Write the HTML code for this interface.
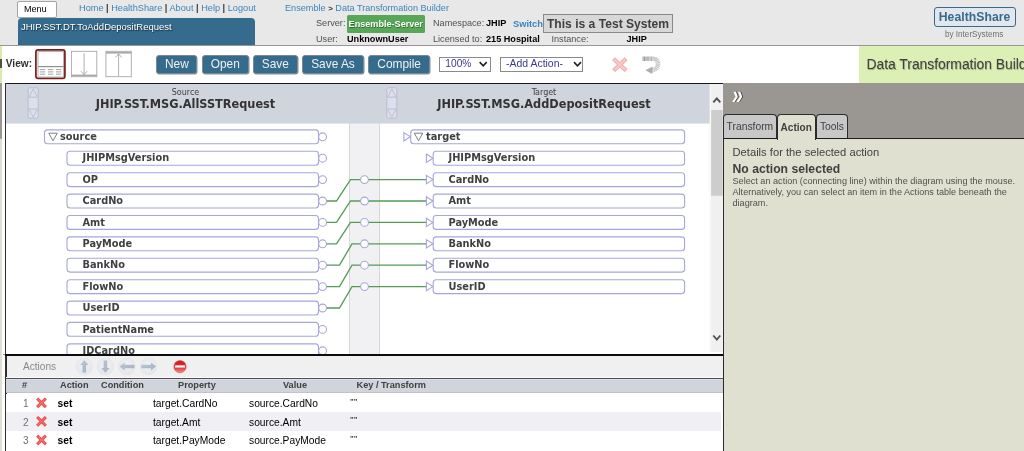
<!DOCTYPE html>
<html>
<head>
<meta charset="utf-8">
<title>Data Transformation Builder</title>
<style>
html,body{margin:0;padding:0;}
body{width:1024px;height:451px;overflow:hidden;background:#fff;font-family:"Liberation Sans",Arial,sans-serif;position:relative;color:#404040;}
.abs{position:absolute;white-space:nowrap;}
#hdr{left:0;top:0;width:1024px;height:45px;background:#e8e8e8;border-bottom:1px solid #969696;}
#menu{left:16.9px;top:0.7px;width:38.5px;height:15px;background:#fff;border:1px solid #a4a4a4;border-radius:2px;font-size:9.1px;line-height:15px;color:#000;}
#menu span{margin-left:6px;}
.lnk{font-size:9.15px;line-height:11px;color:#3b84bc;}
.lnk i{font-style:normal;color:#383838;font-weight:bold;}
#ttl{left:17.5px;top:18.3px;width:237.2px;height:27px;background:#356b8d;border-radius:4px 4px 0 0;}
#ttl span{position:absolute;left:3.4px;top:2.8px;font-size:9.5px;line-height:11px;color:#fff;text-shadow:0.7px 0.7px 1px #1a2a38;}
.lab{font-size:9.15px;line-height:11px;color:#505050;}
.val{font-size:9.15px;line-height:11px;color:#000;font-weight:bold;}
#srv{left:346.5px;top:15px;width:78.5px;height:17.5px;background:#58a658;border-radius:1.5px;color:#fff;font-weight:bold;font-size:9.1px;line-height:19px;text-align:center;text-shadow:0.5px 0.5px 0.6px #2d6a2d;}
#tst{left:543px;top:14.4px;width:128px;height:16.6px;background:#d8d8d8;border:1px solid #8a8a8a;color:#404040;font-weight:bold;font-size:12.1px;line-height:18.2px;text-align:center;}
#logo{left:933.5px;top:7px;width:80.2px;height:17.6px;border:1.9px solid #356b8d;border-radius:3px;background:#e2e6ee;color:#356b8d;font-weight:bold;font-size:12.2px;line-height:18px;text-align:center;letter-spacing:0.05px;}
#by{left:945px;top:28.6px;font-size:8.15px;line-height:11px;color:#707070;}
#tb{left:0;top:46px;width:1024px;height:37px;background:#fff;}
#banner{left:858.5px;top:46px;width:166px;height:36.7px;background:#dcefb4;}
#banner span{position:absolute;left:8px;top:9px;font-size:13.85px;line-height:18px;color:#404040;text-shadow:0.6px 0.6px 0.8px #9aa880;}
.btn{top:54.5px;height:17.8px;background:#356b8d;border:1px solid #7c8790;border-radius:3px;color:#f0f0f0;font-size:11.9px;line-height:17.8px;text-align:center;box-shadow:0.5px 0.5px 0.5px #8090a0;}
.sel{top:57px;height:12.5px;border:1px solid #8a8a8a;background:#fff;color:#3a3a8a;font-size:10.2px;line-height:12.4px;}
.sel span{margin-left:4.5px;}
#side{left:722.5px;top:83px;width:302px;height:368px;background:#9a9793;}
#pane{left:722.5px;top:137.7px;width:302px;height:313px;background:#e0e0d0;border-left:1px solid #2a2a2a;border-top:1px solid #1c1c1c;}
.tab{top:113.7px;height:23.3px;background:#c8c8c8;border:1.3px solid #2c2c2c;border-bottom:none;border-radius:4px 4px 0 0;font-size:10.3px;line-height:23px;color:#404040;text-align:center;}
#tabA{top:113.8px;height:24.9px;background:#e0e0d0;font-weight:bold;font-size:10.05px;line-height:26px;border-width:1px 1.5px 0 1px;}
#act{left:6.7px;top:356.4px;width:716.3px;height:21px;background:#f0f0f0;}
#thead{left:6px;top:378.9px;width:717px;height:13px;background:#d0d4dc;border-top:1px solid #dde0e8;border-bottom:1.6px solid #c2c2c4;height:12.2px;}
.th{top:379.4px;font-size:9.2px;line-height:13px;font-weight:bold;color:#404040;}
.row{left:6px;width:715px;height:18.6px;}
#r3{height:21px;}
.td{font-size:10.25px;line-height:13px;color:#000;}
.num{font-size:10.15px;line-height:13px;color:#707070;}
</style>
</head>
<body>
<div id="root" style="position:absolute;left:0;top:0;width:1024px;height:451px;overflow:hidden;will-change:transform;">
<!-- header -->
<div id="hdr" class="abs"></div>
<div id="menu" class="abs"><span>Menu</span></div>
<div class="abs lnk" style="left:79px;top:3px;font-size:9.2px">Home <i>|</i> HealthShare <i>|</i> About <i>|</i> Help <i>|</i> Logout</div>
<div class="abs lnk" style="left:285px;top:3px">Ensemble <i style="font-weight:bold;font-size:8px">&gt;</i> Data Transformation Builder</div>
<div id="ttl" class="abs"><span>JHIP.SST.DT.ToAddDepositRequest</span></div>
<div class="abs lab" style="left:316px;top:18.2px">Server:</div>
<div id="srv" class="abs">Ensemble-Server</div>
<div class="abs lab" style="left:433px;top:18.2px">Namespace:</div>
<div class="abs val" style="left:486px;top:18.2px">JHIP</div>
<div class="abs lnk" style="left:513px;top:18.7px;font-weight:bold;font-size:9.3px">Switch</div>
<div id="tst" class="abs">This is a Test System</div>
<div class="abs lab" style="left:316px;top:33.5px">User:</div>
<div class="abs val" style="left:347px;top:33.5px">UnknownUser</div>
<div class="abs lab" style="left:433px;top:33.5px">Licensed to:</div>
<div class="abs val" style="left:486px;top:33.5px">215 Hospital</div>
<div class="abs lab" style="left:551.5px;top:33.5px">Instance:</div>
<div class="abs val" style="left:626.5px;top:33.5px">JHIP</div>
<div id="logo" class="abs">HealthShare</div>
<div id="by" class="abs">by InterSystems</div>

<!-- toolbar -->
<div id="tb" class="abs"></div>
<div class="abs" style="left:0;top:46px;width:2px;height:37px;background:#d8eca8"></div>
<div class="abs" style="left:0;top:58.5px;width:1.5px;height:9.5px;background:#505050"></div>
<div class="abs" style="left:5.8px;top:57px;font-size:10.15px;line-height:13px;font-weight:bold;color:#303030">View:</div>
<svg class="abs" style="left:34px;top:48px" width="100" height="33" viewBox="34 48 100 33">
  <rect x="35.9" y="49.8" width="29" height="28.6" rx="2.2" fill="#fff" stroke="#7a1c1c" stroke-width="1.7"/>
  <g fill="none" stroke="#a8a8a8" stroke-width="0.9">
    <rect x="38" y="51.6" width="25.4" height="25.4"/>
    <path d="M38 66.6 H63.4" stroke="#909090" stroke-width="1.2"/>
    <path d="M39.8 69.6 h5.4 M47.9 69.6 h5.4 M56 69.6 h5.4 M39.8 71.9 h5.4 M47.9 71.9 h5.4 M56 71.9 h5.4 M39.8 74.2 h5.4 M47.9 74.2 h5.4 M56 74.2 h5.4" stroke="#8c8c8c" stroke-width="0.8"/>
    <rect x="71.4" y="51.3" width="25.4" height="25.4" fill="#fff"/>
    <path d="M71.4 75.4 H96.8" stroke-width="1.6"/>
    <path d="M84.1 53.2 V74.6 M81 71.2 L84.1 74.6 L87.2 71.2" stroke="#9c9c9c" stroke-width="0.8"/>
    <rect x="105.9" y="51.3" width="25.4" height="25.4" fill="#fff"/>
    <path d="M105.9 52.8 H131.3" stroke-width="1.6"/>
    <path d="M118.6 76 V54 M115.5 57.4 L118.6 54 L121.7 57.4" stroke="#9c9c9c" stroke-width="0.8"/>
  </g>
</svg>
<div class="abs btn" style="left:156.2px;width:39.3px">New</div>
<div class="abs btn" style="left:201.5px;width:45.5px">Open</div>
<div class="abs btn" style="left:252.8px;width:43.2px">Save</div>
<div class="abs btn" style="left:302px;width:60px">Save As</div>
<div class="abs btn" style="left:368.3px;width:59.7px">Compile</div>
<div class="abs sel" style="left:439px;width:49.5px"><span style="margin-left:5.3px">100%</span></div>
<div class="abs sel" style="left:499.8px;width:81.7px;font-size:10.45px"><span style="margin-left:5.3px">-Add Action-</span></div>
<svg class="abs" style="left:439px;top:56px" width="230" height="20" viewBox="439 56 230 20">
  <path d="M479.7 62.1 L483.2 65.8 L486.7 62.1" fill="none" stroke="#202020" stroke-width="1.6"/>
  <path d="M574 62.1 L577.5 65.8 L581 62.1" fill="none" stroke="#202020" stroke-width="1.6"/>
  <g stroke-linecap="square" fill="none"><path d="M615.1 60.2 L624.5 69.2 M624.5 60.2 L615.1 69.2" stroke="#f2a4a4" stroke-width="4.1"/><path d="M615.1 60.2 L624.5 69.2 M624.5 60.2 L615.1 69.2" stroke="#f9c6c6" stroke-width="2.6"/></g>
  <defs><linearGradient id="gu" gradientUnits="userSpaceOnUse" x1="642" y1="58" x2="660" y2="68"><stop offset="0" stop-color="#8e8e8e"/><stop offset="0.55" stop-color="#bcbcbc"/><stop offset="1" stop-color="#cacaca"/></linearGradient></defs>
  <path d="M642.6 58.8 H652.6 C657.4 58.8 658.4 62.6 657.8 65.4 C657.2 68.4 654.6 70.2 651.6 70.3" fill="none" stroke="url(#gu)" stroke-width="4.5" stroke-dasharray="1 0.4"/>
  <path d="M645.4 70.3 L652.6 66.4 L652.2 74 Z" fill="#adadad"/>
</svg>
<div id="banner" class="abs"><span>Data Transformation Builder</span></div>

<!-- diagram frame -->
<div class="abs" style="left:5px;top:82.5px;width:718px;height:1.5px;background:#1a1a1a"></div>
<div class="abs" style="left:5.2px;top:83px;width:1.5px;height:368px;background:#303030"></div>
<div class="abs" style="left:0;top:83px;width:1.7px;height:55.5px;background:#9a9793"></div><div class="abs" style="left:0;top:138px;width:2.2px;height:313px;background:#a8a89c"></div><div class="abs" style="left:0;top:139px;width:1.6px;height:312px;background:#e0e0d0"></div>
<svg id="dg" width="717" height="271" viewBox="6 84 717 271" style="position:absolute;left:6px;top:84px;overflow:hidden">
<rect x="6" y="84" width="704" height="271" fill="#fff"/>
<rect x="349.5" y="84" width="30" height="271" fill="#f1f1f4" stroke="#cfcfd4" stroke-width="0.8"/>
<rect x="6" y="84" width="704" height="39.6" fill="#d0d4dc"/>
<g fill="#dcdfec" stroke="#b4b8cc" stroke-width="0.8"><rect x="28.2" y="87.8" width="10" height="30.4" rx="1.5"/><path d="M29.0 97.2 L33.2 89 L37.4 97.2 Z"/><path d="M29.0 109 L33.2 117.2 L37.4 109 Z"/></g>
<g fill="#dcdfec" stroke="#b4b8cc" stroke-width="0.8"><rect x="386.8" y="87.8" width="10" height="30.4" rx="1.5"/><path d="M387.6 97.2 L391.8 89 L396.0 97.2 Z"/><path d="M387.6 109 L391.8 117.2 L396.0 109 Z"/></g>
<g font-family="'DejaVu Sans Condensed', 'DejaVu Sans', 'Liberation Sans', sans-serif" font-size="8.9" fill="#404040" text-anchor="middle"><text x="185.5" y="95">Source</text><text x="544" y="95">Target</text></g>
<g font-family="'DejaVu Sans Condensed', 'DejaVu Sans', 'Liberation Sans', sans-serif" font-weight="bold" font-size="12.6" fill="#333" text-anchor="middle"><text x="185.5" y="108">JHIP.SST.MSG.AllSSTRequest</text><text x="544" y="108">JHIP.SST.MSG.AddDepositRequest</text></g>
<g fill="none" stroke="#559a55" stroke-width="1.3">
<path d="M326.5 201.0 H336.5 L350.5 179.6 H426"/>
<path d="M326.5 222.4 H336.5 L350.5 201.0 H426"/>
<path d="M326.5 243.8 H336.5 L350.5 222.4 H426"/>
<path d="M326.5 265.2 H339.5 L352 243.8 H426"/>
<path d="M326.5 286.6 H339.5 L352 265.2 H426"/>
<path d="M326.5 308.0 H339.5 L352 286.6 H426"/>
</g>
<g fill="#fff" stroke="#a6a6dc" stroke-width="1.1">
<rect x="44.5" y="129.9" width="274.0" height="13.9" rx="3"/>
<circle cx="322.6" cy="136.8" r="3.9"/>
<rect x="67" y="151.3" width="251.5" height="13.9" rx="3"/>
<circle cx="322.6" cy="158.2" r="3.9"/>
<rect x="67" y="172.7" width="251.5" height="13.9" rx="3"/>
<circle cx="322.6" cy="179.6" r="3.9"/>
<rect x="67" y="194.1" width="251.5" height="13.9" rx="3"/>
<circle cx="322.6" cy="201.0" r="3.9"/>
<rect x="67" y="215.5" width="251.5" height="13.9" rx="3"/>
<circle cx="322.6" cy="222.4" r="3.9"/>
<rect x="67" y="236.9" width="251.5" height="13.9" rx="3"/>
<circle cx="322.6" cy="243.8" r="3.9"/>
<rect x="67" y="258.2" width="251.5" height="13.9" rx="3"/>
<circle cx="322.6" cy="265.2" r="3.9"/>
<rect x="67" y="279.7" width="251.5" height="13.9" rx="3"/>
<circle cx="322.6" cy="286.6" r="3.9"/>
<rect x="67" y="301.1" width="251.5" height="13.9" rx="3"/>
<circle cx="322.6" cy="308.0" r="3.9"/>
<rect x="67" y="322.4" width="251.5" height="13.9" rx="3"/>
<circle cx="322.6" cy="329.4" r="3.9"/>
<rect x="67" y="343.9" width="251.5" height="13.9" rx="3"/>
<circle cx="322.6" cy="350.8" r="3.9"/>
<rect x="410.7" y="129.9" width="273.90000000000003" height="13.9" rx="3"/>
<path d="M403.9 132.6 L410.4 136.8 L403.9 141.0 Z"/>
<rect x="433.2" y="151.3" width="251.40000000000003" height="13.9" rx="3"/>
<path d="M426.4 154.0 L432.9 158.2 L426.4 162.4 Z"/>
<rect x="433.2" y="172.7" width="251.40000000000003" height="13.9" rx="3"/>
<path d="M426.4 175.4 L432.9 179.6 L426.4 183.8 Z"/>
<rect x="433.2" y="194.1" width="251.40000000000003" height="13.9" rx="3"/>
<path d="M426.4 196.8 L432.9 201.0 L426.4 205.2 Z"/>
<rect x="433.2" y="215.5" width="251.40000000000003" height="13.9" rx="3"/>
<path d="M426.4 218.2 L432.9 222.4 L426.4 226.6 Z"/>
<rect x="433.2" y="236.9" width="251.40000000000003" height="13.9" rx="3"/>
<path d="M426.4 239.6 L432.9 243.8 L426.4 248.0 Z"/>
<rect x="433.2" y="258.2" width="251.40000000000003" height="13.9" rx="3"/>
<path d="M426.4 261.0 L432.9 265.2 L426.4 269.4 Z"/>
<rect x="433.2" y="279.7" width="251.40000000000003" height="13.9" rx="3"/>
<path d="M426.4 282.4 L432.9 286.6 L426.4 290.8 Z"/>
<circle cx="364.5" cy="179.6" r="3.9"/>
<circle cx="364.5" cy="201.0" r="3.9"/>
<circle cx="364.5" cy="222.4" r="3.9"/>
<circle cx="364.5" cy="243.8" r="3.9"/>
<circle cx="364.5" cy="265.2" r="3.9"/>
<circle cx="364.5" cy="286.6" r="3.9"/>
</g>
<g fill="#fff" stroke="#707080" stroke-width="0.9">
<path d="M48.8 133.2 H57.2 L53 140.8 Z"/>
<path d="M414.3 133.2 H422.7 L418.5 140.8 Z"/>
</g>
<g font-family="'DejaVu Sans Condensed', 'DejaVu Sans', 'Liberation Sans', sans-serif" font-weight="bold" font-size="10.9" fill="#404040">
<text x="60" y="139.9">source</text>
<text x="82.5" y="161.3">JHIPMsgVersion</text>
<text x="82.5" y="182.7">OP</text>
<text x="82.5" y="204.1">CardNo</text>
<text x="82.5" y="225.5">Amt</text>
<text x="82.5" y="246.9">PayMode</text>
<text x="82.5" y="268.3">BankNo</text>
<text x="82.5" y="289.7">FlowNo</text>
<text x="82.5" y="311.1">UserID</text>
<text x="82.5" y="332.5">PatientName</text>
<text x="82.5" y="353.9">IDCardNo</text>
<text x="426" y="139.9">target</text>
<text x="448.5" y="161.3">JHIPMsgVersion</text>
<text x="448.5" y="182.7">CardNo</text>
<text x="448.5" y="204.1">Amt</text>
<text x="448.5" y="225.5">PayMode</text>
<text x="448.5" y="246.9">BankNo</text>
<text x="448.5" y="268.3">FlowNo</text>
<text x="448.5" y="289.7">UserID</text>
</g>
<rect x="709.8" y="84" width="13" height="268" fill="#f0f0f0"/>
<rect x="709.8" y="84" width="1.2" height="268" fill="#f8f8f8"/>
<rect x="711.2" y="110" width="11.5" height="85.7" fill="#cdcdcd"/>
<path d="M713.3 102.3 L716.8 98.3 L720.3 102.3" fill="none" stroke="#505050" stroke-width="1.85"/>
<path d="M713.3 335.5 L716.8 339.5 L720.3 335.5" fill="none" stroke="#505050" stroke-width="1.85"/>
</svg>
<div class="abs" style="left:2.5px;top:353.9px;width:3px;height:1.4px;background:#8a8a8a"></div><div class="abs" style="left:5.2px;top:353.6px;width:718px;height:2px;background:#0c0c0c"></div>

<!-- actions -->
<div id="act" class="abs"></div>
<div class="abs" style="left:23px;top:360px;font-size:10.1px;line-height:13px;color:#888">Actions</div>
<svg class="abs" style="left:70px;top:356px" width="130" height="22" viewBox="70 356 130 22">
  <defs>
    <radialGradient id="gb" cx="50%" cy="40%" r="60%"><stop offset="0" stop-color="#f2f3f5"/><stop offset="1" stop-color="#e2e5ea"/></radialGradient>
    <linearGradient id="gr" x1="0" y1="0" x2="0" y2="1"><stop offset="0" stop-color="#cc1c1c"/><stop offset="0.55" stop-color="#de3030"/><stop offset="1" stop-color="#f59090"/></linearGradient>
    <linearGradient id="ga" x1="0" y1="0" x2="1" y2="1"><stop offset="0" stop-color="#bcc7d2"/><stop offset="1" stop-color="#a4b1c0"/></linearGradient>
  </defs>
  <g fill="url(#gb)" stroke="#e4e6ea" stroke-width="0.6">
    <circle cx="84.3" cy="366.5" r="8.4"/><circle cx="105.4" cy="366.5" r="8.4"/><circle cx="127" cy="366.5" r="8.4"/><circle cx="148.6" cy="366.5" r="8.4"/>
  </g>
  <g fill="url(#ga)">
    <path d="M84.3 360.2 L88.5 365.0 H86.1 V372.6 H82.5 V365.0 H80.1 Z"/>
    <path d="M105.4 372.8 L109.60000000000001 368.0 H107.2 V360.4 H103.60000000000001 V368.0 H101.2 Z"/>
    <path d="M119.6 366.5 L124.6 362.6 V364.8 H134.4 V368.2 H124.6 V370.4 Z"/>
    <path d="M156.0 366.5 L151.0 362.6 V364.8 H141.2 V368.2 H151.0 V370.4 Z"/>
  </g>
  <circle cx="180" cy="366.7" r="6.2" fill="url(#gr)" stroke="#d84848" stroke-width="0.5"/>
  <rect x="174.9" y="365.2" width="10.2" height="2.5" rx="0.5" fill="#fff" stroke="#b06060" stroke-width="0.4"/>
</svg>
<div class="abs" style="left:6px;top:376.8px;width:716px;height:1px;background:#fbfbfb"></div><div class="abs" style="left:6px;top:377.8px;width:717px;height:1.1px;background:#505050"></div>
<div id="thead" class="abs"></div>
<div class="abs th" style="left:22px">#</div>
<div class="abs th" style="left:60px">Action</div>
<div class="abs th" style="left:101px">Condition</div>
<div class="abs th" style="left:178px">Property</div>
<div class="abs th" style="left:283px">Value</div>
<div class="abs th" style="left:356.5px">Key / Transform</div>

<div class="abs row" style="top:393.5px;background:#fff"></div>
<div class="abs row" style="top:412.1px;background:#f0f0f4"></div>
<div id="r3" class="abs row" style="top:430.7px;background:#fff"></div>

<div class="abs num" style="left:23px;top:397px">1</div>
<div class="abs td" style="left:57.5px;top:397px;font-weight:bold">set</div>
<div class="abs td" style="left:153px;top:397px">target.CardNo</div>
<div class="abs td" style="left:249px;top:397px">source.CardNo</div>
<div class="abs td" style="left:350px;top:394.5px;font-size:7.8px;font-weight:bold;color:#333;letter-spacing:0.1px">""</div>

<div class="abs num" style="left:23px;top:415.6px">2</div>
<div class="abs td" style="left:57.5px;top:415.6px;font-weight:bold">set</div>
<div class="abs td" style="left:153px;top:415.6px">target.Amt</div>
<div class="abs td" style="left:249px;top:415.6px">source.Amt</div>
<div class="abs td" style="left:350px;top:413.1px;font-size:7.8px;font-weight:bold;color:#333;letter-spacing:0.1px">""</div>

<div class="abs num" style="left:23px;top:434.2px">3</div>
<div class="abs td" style="left:57.5px;top:434.2px;font-weight:bold">set</div>
<div class="abs td" style="left:153px;top:434.2px">target.PayMode</div>
<div class="abs td" style="left:249px;top:434.2px">source.PayMode</div>
<div class="abs td" style="left:350px;top:431.7px;font-size:7.8px;font-weight:bold;color:#333;letter-spacing:0.1px">""</div>

<svg class="abs" style="left:34px;top:396px" width="16" height="55" viewBox="34 396 16 55">
  <g fill="none" stroke="#ee4848" stroke-width="3" stroke-linecap="square"><path d="M38.2 399.5 L44.8 406.1 M44.8 399.5 L38.2 406.1"/><path d="M38.2 418.1 L44.8 424.7 M44.8 418.1 L38.2 424.7"/><path d="M38.2 436.7 L44.8 443.3 M44.8 436.7 L38.2 443.3"/></g>
  <g fill="none" stroke="#f47070" stroke-width="1.2" stroke-linecap="square"><path d="M38.2 399.5 L44.8 406.1 M44.8 399.5 L38.2 406.1"/><path d="M38.2 418.1 L44.8 424.7 M44.8 418.1 L38.2 424.7"/><path d="M38.2 436.7 L44.8 443.3 M44.8 436.7 L38.2 443.3"/></g>
</svg>

<!-- side panel -->
<div id="side" class="abs"></div>
<div class="abs" style="left:731.5px;top:84.6px;font-size:20px;line-height:20px;font-weight:bold;color:#fff;font-style:italic;transform:scale(0.97,1.3);transform-origin:0 60%;text-shadow:0.7px 0.7px 0.5px #222">»</div>
<div id="pane" class="abs"></div>
<div class="abs tab" style="left:722.8px;width:52.2px">Transform</div>
<div class="abs tab" style="left:816px;width:30px">Tools</div>
<div id="tabA" class="abs tab" style="left:777px;width:36.5px">Action</div>
<div class="abs" style="left:732.5px;top:145.5px;font-size:11.2px;line-height:13px;color:#404040">Details for the selected action</div>
<div class="abs" style="left:732.5px;top:161.5px;font-size:12.2px;line-height:14px;font-weight:bold;color:#404040">No action selected</div>
<div class="abs" style="left:732.5px;top:175.6px;font-size:9.12px;line-height:11.1px;color:#505050">Select an action (connecting line) within the diagram using the mouse.<br>Alternatively, you can select an item in the Actions table beneath the<br>diagram.</div>
</div>
</body>
</html>
